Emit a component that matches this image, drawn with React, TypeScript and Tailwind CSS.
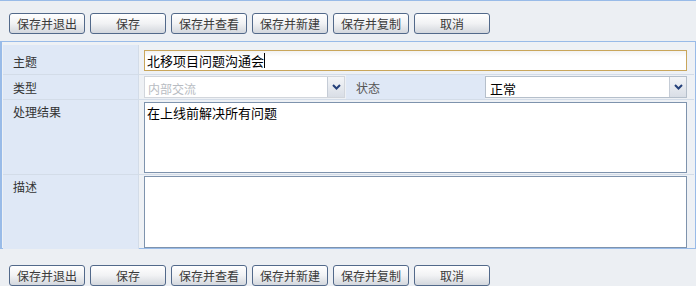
import React from "react";

const buttons = ["保存并退出", "保存", "保存并查看", "保存并新建", "保存并复制", "取消"];

function Toolbar({ className = "" }: { className?: string }) {
  return (
    <div className={`flex gap-[5px] pl-[9px] ${className}`}>
      {buttons.map((b) => (
        <button
          key={b}
          className="w-[76px] h-[21px] rounded-[3px] border border-[#52698a] bg-gradient-to-b from-[#ffffff] via-[#f1f2f4] to-[#d3d7dd] text-[12px] leading-none text-[#3a3a3a]"
        >
          {b}
        </button>
      ))}
    </div>
  );
}

function Arrow() {
  return (
    <div className="w-[17px] h-full flex items-center justify-center border-l border-[#c5ccd6] bg-gradient-to-b from-[#f3f5f8] to-[#d9dee6]">
      <svg width="9" height="6" viewBox="0 0 9 6">
        <path d="M1 1 L4.5 4.5 L8 1" stroke="#24407a" strokeWidth="2" fill="none" />
      </svg>
    </div>
  );
}

export default function App() {
  return (
    <div
      className="w-[696px] h-[286px] overflow-hidden bg-[#eceff3] text-[12px] text-[#333]"
      style={{ fontFamily: '"Noto Sans CJK SC", "Noto Sans", sans-serif' }}
    >
      {/* top toolbar */}
      <div className="border-t border-[#99bbe8] h-[41px] pt-[12px]">
        <Toolbar />
      </div>

      {/* form panel */}
      <div className="border-t border-b border-l-2 border-r border-[#99bbe8] bg-[#eef1f5] px-[1px] pt-[3px] pb-[2px] h-[208px]">
        <div className="flex flex-col">
          {/* 主题 */}
          <div className="flex h-[30px] border-b border-[#d3dce8]">
            <div className="w-[136px] bg-[#dfe8f6] pl-[10px] pt-[8px] border-r border-[#d3dce8]">主题</div>
            <div className="flex-1 pl-[5px] pr-[7px] pt-[5px] bg-[#eef1f5]">
              <div className="h-[21px] border border-[#c9a65b] bg-gradient-to-b from-[#f2f2f2] to-white to-[30%] flex items-center pl-[2px] text-[13px] text-black">
                北移项目问题沟通会<span className="inline-block w-[1px] h-[15px] bg-black" />
              </div>
            </div>
          </div>
          {/* 类型 / 状态 */}
          <div className="flex h-[25px] border-b border-[#d3dce8]">
            <div className="w-[136px] bg-[#dfe8f6] pl-[10px] pt-[4px] border-r border-[#d3dce8]">类型</div>
            <div className="w-[206px] pl-[5px] pt-[1px]">
              <div className="h-[22px] border border-[#d2d6dc] bg-white flex">
                <div className="flex-1 pl-[3px] pt-[3px] text-[#b8bcc2]">内部交流</div>
                <Arrow />
              </div>
            </div>
            <div className="w-[139px] bg-[#dfe8f6] pl-[10px] pt-[4px] ml-[1px] text-[#555]">状态</div>
            <div className="flex-1 pr-[7px] pt-[1px]">
              <div className="h-[22px] border border-[#b5bfcb] bg-white flex">
                <div className="flex-1 pl-[4px] pt-[2px] text-[13px] text-black">正常</div>
                <Arrow />
              </div>
            </div>
          </div>
          {/* 处理结果 */}
          <div className="flex h-[75px] border-b border-[#d3dce8]">
            <div className="w-[136px] bg-[#dfe8f6] pl-[10px] pt-[3px] border-r border-[#d3dce8]">处理结果</div>
            <div className="flex-1 pl-[5px] pr-[7px] pt-[2px]">
              <div className="h-[71px] border border-[#7e93ad] bg-white pl-[2px] text-[13px] text-black">
                在上线前解决所有问题
              </div>
            </div>
          </div>
          {/* 描述 */}
          <div className="flex h-[74px]">
            <div className="w-[136px] bg-[#dfe8f6] pl-[10px] pt-[3px] border-r border-[#d3dce8]">描述</div>
            <div className="flex-1 pl-[5px] pr-[7px] pt-[1px]">
              <div className="h-[72px] border border-[#7e93ad] bg-white" />
            </div>
          </div>
        </div>
      </div>

      {/* bottom toolbar */}
      <div className="pt-[16px]">
        <Toolbar />
      </div>
    </div>
  );
}
